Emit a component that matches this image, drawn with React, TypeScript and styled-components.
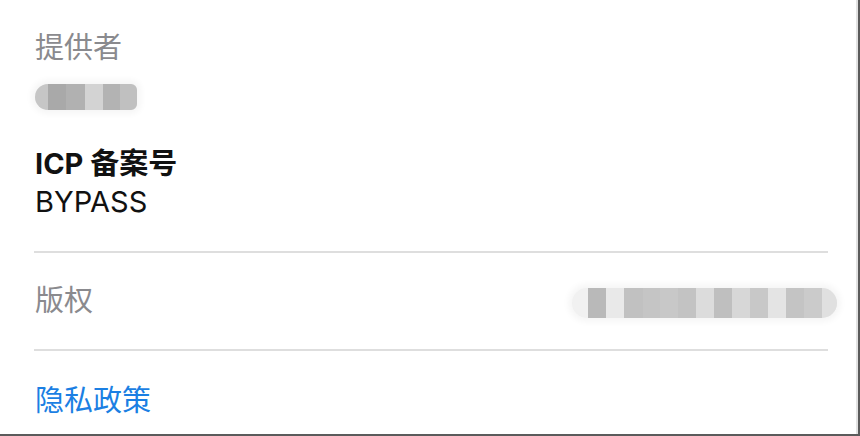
import React from "react";
import styled, { createGlobalStyle } from "styled-components";

const Global = createGlobalStyle`
  html, body { margin: 0; padding: 0; background: #ffffff; }
  body { font-family: Inter, "Noto Sans CJK SC", "Noto Sans", sans-serif; }
`;

const Frame = styled.div`
  width: 860px;
  height: 436px;
  box-sizing: border-box;
  border-right: 2px solid #5b5b5b;
  border-bottom: 2px solid #5b5b5b;
  background: #ffffff;
  overflow: hidden;
`;

const Panel = styled.div`
  height: 100%;
  box-sizing: border-box;
  border-right: 2px solid #e2e2e2;
  padding: 28px 28px 0 34px;
  display: flex;
  flex-direction: column;
`;

const Section = styled.div<{ $top?: number; $line?: number }>`
  display: flex;
  flex-direction: column;
  padding-top: ${(p) => p.$top ?? 0}px;
  padding-left: 1px;
  --line: ${(p) => p.$line ?? 40}px;
`;

const Label = styled.div<{ $strong?: boolean }>`
  font-size: 29px;
  line-height: var(--line, 40px);
  height: var(--line, 40px);
  color: ${(p) => (p.$strong ? "#111111" : "#8a8a8e")};
  font-weight: ${(p) => (p.$strong ? 700 : 400)};
  white-space: nowrap;
`;

const Value = styled.div`
  font-size: 29px;
  line-height: var(--line, 40px);
  height: var(--line, 40px);
  color: #111111;
  white-space: nowrap;
`;

const Divider = styled.div<{ $top: number }>`
  margin-top: ${(p) => p.$top}px;
  height: 2px;
  background: #dedede;
`;

const Row = styled.div`
  height: 96px;
  display: flex;
  align-items: center;
  justify-content: space-between;
  padding-left: 1px;
`;

const Link = styled.div`
  margin-top: 30px;
  padding-left: 1px;
  font-size: 29px;
  line-height: 40px;
  color: #1b7fe3;
`;

const Mosaic = styled.div<{ $top?: number; $right?: number; $lead?: number }>`
  display: flex;
  margin-top: ${(p) => p.$top ?? 0}px;
  margin-right: ${(p) => p.$right ?? 0}px;
  padding-left: ${(p) => p.$lead ?? 0}px;
  height: 26px;
  border-radius: 13px 6px 6px 13px;
  overflow: hidden;
  align-self: flex-start;
  background: #f1f1f1;
  box-shadow: 0 0 6px 4px #f6f6f6;
  filter: blur(0.5px);
`;

const RightMosaic = styled(Mosaic)`
  height: 30px;
  border-radius: 15px;
  align-self: center;
  margin-top: 4px;
`;

const Cell = styled.div<{ $shade: string; $w: number }>`
  width: ${(p) => p.$w}px;
  height: 100%;
  background: ${(p) => p.$shade};
`;

const leftCells: [string, number][] = [
  ["#c6c6c6", 13],
  ["#a9a9a9", 18],
  ["#b1b1b1", 19],
  ["#d3d3d3", 18],
  ["#b3b3b3", 17],
  ["#c0c0c0", 17],
];

const rightCells: [string, number][] = [
  ["#b9b9b9", 18],
  ["#e9e9e9", 18],
  ["#c1c1c1", 19],
  ["#c5c5c5", 17],
  ["#c8c8c8", 18],
  ["#c3c3c3", 18],
  ["#dcdcdc", 18],
  ["#bfbfbf", 18],
  ["#d7d7d7", 18],
  ["#c8c8c8", 18],
  ["#e4e4e4", 18],
  ["#c4c4c4", 18],
  ["#cbcbcb", 18],
  ["#e0e0e0", 15],
];

export default function App() {
  return (
    <>
      <Global />
      <Frame>
        <Panel>
          <Section>
            <Label>提供者</Label>
            <Mosaic $top={16}>
              {leftCells.map(([c, w], i) => (
                <Cell key={i} $shade={c} $w={w} />
              ))}
            </Mosaic>
          </Section>
          <Section $top={35} $line={38}>
            <Label $strong>ICP 备案号</Label>
            <Value>BYPASS</Value>
          </Section>
          <Divider $top={30} />
          <Row>
            <Label>版权</Label>
            <RightMosaic $right={-9} $lead={16}>
              {rightCells.map(([c, w], i) => (
                <Cell key={i} $shade={c} $w={w} />
              ))}
            </RightMosaic>
          </Row>
          <Divider $top={0} />
          <Link>隐私政策</Link>
        </Panel>
      </Frame>
    </>
  );
}
